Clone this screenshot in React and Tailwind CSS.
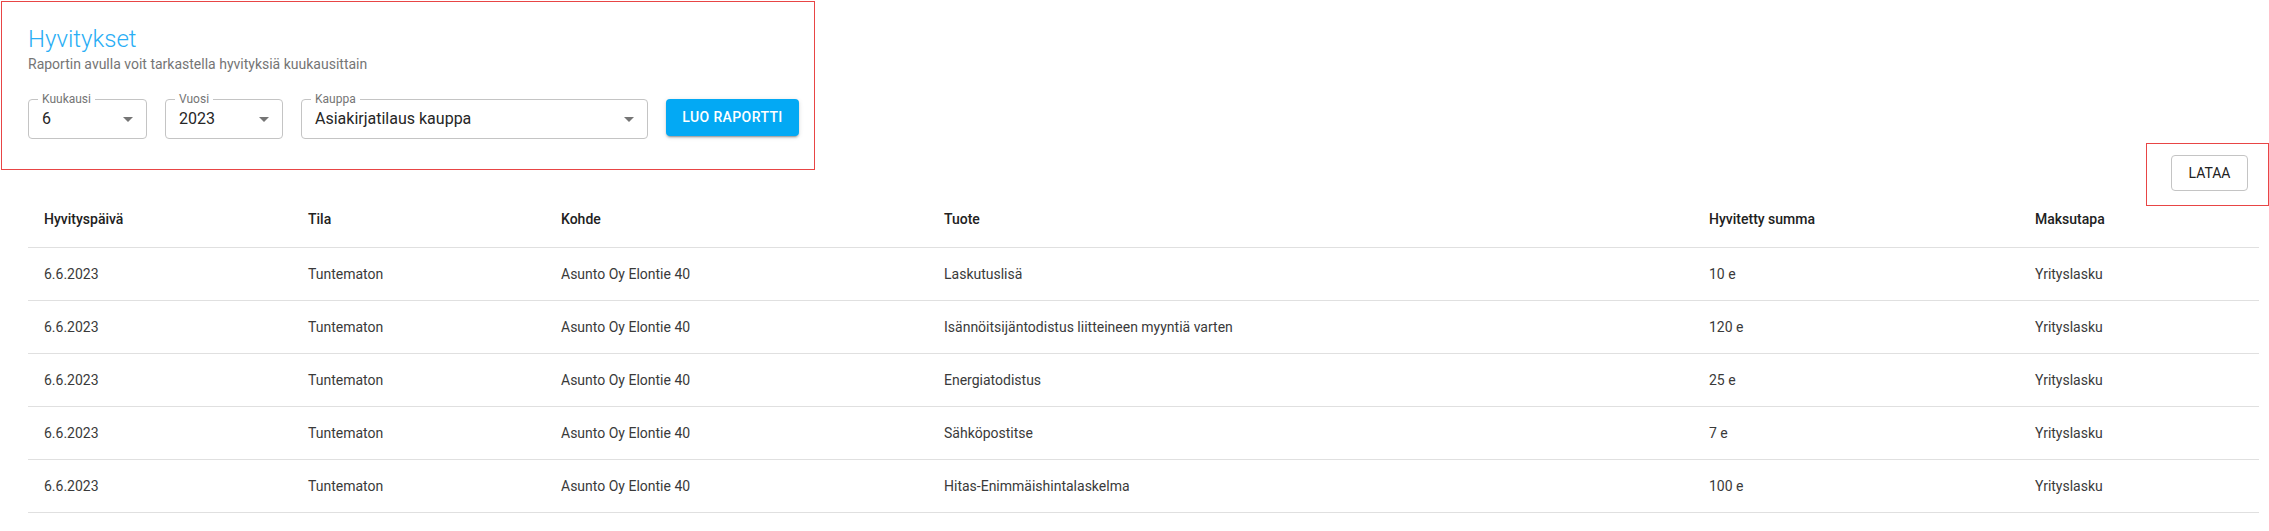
import React from "react";

// Raportin rivit
const rows = [
  { date: "6.6.2023", status: "Tuntematon", target: "Asunto Oy Elontie 40", product: "Laskutuslisä", sum: "10 e", method: "Yrityslasku" },
  { date: "6.6.2023", status: "Tuntematon", target: "Asunto Oy Elontie 40", product: "Isännöitsijäntodistus liitteineen myyntiä varten", sum: "120 e", method: "Yrityslasku" },
  { date: "6.6.2023", status: "Tuntematon", target: "Asunto Oy Elontie 40", product: "Energiatodistus", sum: "25 e", method: "Yrityslasku" },
  { date: "6.6.2023", status: "Tuntematon", target: "Asunto Oy Elontie 40", product: "Sähköpostitse", sum: "7 e", method: "Yrityslasku" },
  { date: "6.6.2023", status: "Tuntematon", target: "Asunto Oy Elontie 40", product: "Hitas-Enimmäishintalaskelma", sum: "100 e", method: "Yrityslasku" },
];

const headers = ["Hyvityspäivä", "Tila", "Kohde", "Tuote", "Hyvitetty summa", "Maksutapa"];

// Outlined select (MUI-tyylinen)
const OutlinedSelect = ({ label, value, width }) => (
  <div className={`relative h-[40px] rounded-[4px] border border-[#c4c4c4] ${width}`}>
    <span className="absolute -top-[8px] left-[9px] bg-white px-[4px] text-[12px] leading-[14px] text-[#757575]">
      {label}
    </span>
    <div className="flex h-full items-center pl-[13px]">
      <span className="text-[16px] leading-[20px] text-[#262626]">{value}</span>
    </div>
    <svg
      viewBox="0 0 24 24"
      className="absolute right-[6px] top-[7px] h-[24px] w-[24px] fill-[#757575]"
    >
      <path d="M7 10l5 5 5-5z" />
    </svg>
  </div>
);

const App = () => {
  return (
    <div className="min-h-screen bg-white font-['Roboto','Liberation_Sans',sans-serif] text-[#212121]">
      {/* Yläosan suodatinlaatikko */}
      <div className="ml-[1px] mt-[1px] w-[814px] border border-[#e84545] pb-[30px] pl-[26px] pt-[22px]">
        <h1 className="text-[24px] font-light leading-[30px] text-[#2aaef5]">Hyvitykset</h1>
        <p className="text-[14px] leading-[20px] text-[#757575]">
          Raportin avulla voit tarkastella hyvityksiä kuukausittain
        </p>
        <div className="mt-[25px] flex items-start gap-[18px]">
          <OutlinedSelect label="Kuukausi" value="6" width="w-[119px]" />
          <OutlinedSelect label="Vuosi" value="2023" width="w-[118px]" />
          <OutlinedSelect label="Kauppa" value="Asiakirjatilaus kauppa" width="w-[347px]" />
          <button className="h-[37px] w-[133px] rounded-[4px] bg-[#03a9f4] text-[14px] font-medium tracking-[0.4px] text-white shadow-[0_3px_1px_-2px_rgba(0,0,0,0.2),0_2px_2px_0_rgba(0,0,0,0.14),0_1px_5px_0_rgba(0,0,0,0.12)]">
            LUO RAPORTTI
          </button>
        </div>
      </div>

      {/* Lataa-painike */}
      <div className="-mt-[27px] flex justify-end">
        <div className="h-[63px] w-[123px] border border-[#e84545] pl-[24px] pt-[11px]">
          <button className="h-[36px] w-[77px] rounded-[4px] border border-[#c4c4c4] text-[14px] text-[#212121]">
            LATAA
          </button>
        </div>
      </div>

      {/* Taulukko */}
      <table className="-mt-[15px] ml-[28px] w-[2231px] table-fixed border-collapse text-left text-[14px]">
        <colgroup>
          <col className="w-[264px]" />
          <col className="w-[253px]" />
          <col className="w-[383px]" />
          <col className="w-[765px]" />
          <col className="w-[326px]" />
          <col className="w-[240px]" />
        </colgroup>
        <thead>
          <tr className="border-b border-[#e0e0e0]">
            {headers.map((h) => (
              <th key={h} className="px-[16px] py-[16px] font-medium leading-[24px] text-[#212121]">
                {h}
              </th>
            ))}
          </tr>
        </thead>
        <tbody className="text-[#3a3a3a]">
          {rows.map((r, i) => (
            <tr key={i} className="border-b border-[#e0e0e0]">
              <td className="px-[16px] py-[16px] leading-[20px]">{r.date}</td>
              <td className="px-[16px] py-[16px] leading-[20px]">{r.status}</td>
              <td className="px-[16px] py-[16px] leading-[20px]">{r.target}</td>
              <td className="px-[16px] py-[16px] leading-[20px]">{r.product}</td>
              <td className="px-[16px] py-[16px] leading-[20px]">{r.sum}</td>
              <td className="px-[16px] py-[16px] leading-[20px]">{r.method}</td>
            </tr>
          ))}
        </tbody>
      </table>
    </div>
  );
};

export default App;
